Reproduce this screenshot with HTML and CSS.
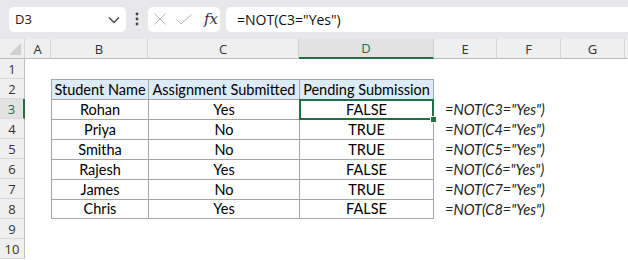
FILE: index.html
```html
<!DOCTYPE html>
<html lang="en">
<head>
    <meta charset="UTF-8">
    <title>NOT function</title>
    <link rel="stylesheet" href="styles.css">
</head>
<body>
    <div class="toolbar">
        <div class="name-box">
            <span>D3</span>
            <svg class="chevron" width="12" height="8" viewBox="0 0 12 8"><path d="M1 1.5 L6 6.5 L11 1.5" fill="none" stroke="#444" stroke-width="1.3"/></svg>
        </div>
        <div class="dots">
            <svg width="4" height="14" viewBox="0 0 4 14"><circle cx="2" cy="2" r="1.4" fill="#444"/><circle cx="2" cy="7" r="1.4" fill="#444"/><circle cx="2" cy="12" r="1.4" fill="#444"/></svg>
        </div>
        <div class="fx-box">
            <svg width="12" height="12" viewBox="0 0 12 12"><path d="M0.5 0.5 L11.5 11.5 M11.5 0.5 L0.5 11.5" stroke="#b4b4b4" stroke-width="1"/></svg>
            <svg width="16" height="11" viewBox="0 0 16 11"><path d="M0.5 5.5 L5 10 L15.5 0.5" fill="none" stroke="#b4b4b4" stroke-width="1"/></svg>
            <span class="fx">fx</span>
        </div>
        <div class="formula-box">=NOT(C3="Yes")</div>
    </div>

    <div class="sheet" id="sheet"></div>

    <script>
        const cols = ["A", "B", "C", "D", "E", "F", "G"];
        const rows = [
            ["Rohan", "Yes"],
            ["Priya", "No"],
            ["Smitha", "No"],
            ["Rajesh", "Yes"],
            ["James", "No"],
            ["Chris", "Yes"]
        ];

        const sheet = document.getElementById("sheet");

        function cell(cls, text) {
            let div = document.createElement("div");
            div.className = cls;
            div.textContent = text || "";
            sheet.appendChild(div);
            return div;
        }

        // column header row
        cell("corner");
        cols.forEach(c => cell("col-head" + (c === "D" ? " active" : ""), c));
        cell("col-head rest");

        for (let r = 1; r <= 10; r++) {
            cell("row-head" + (r === 3 ? " active" : ""), r);
            let data = rows[r - 3];
            for (let c = 0; c < cols.length + 1; c++) {
                let cls = "c";
                let text = "";
                if (r === 2 && c >= 1 && c <= 3) {
                    cls += " t head";
                    text = ["Student Name", "Assignment Submitted", "Pending Submission"][c - 1];
                } else if (data && c >= 1 && c <= 3) {
                    cls += " t";
                    if (c === 1) text = data[0];
                    if (c === 2) text = data[1];
                    if (c === 3) text = data[1] === "Yes" ? "FALSE" : "TRUE";
                } else if (data && c === 4) {
                    cls += " formula";
                    text = '=NOT(C' + r + '="Yes")';
                }
                if (r === 8 && c >= 1 && c <= 3) cls += " last-row";
                if (c === 3 && (data || r === 2)) cls += " last-col";
                let el = cell(cls, text);
                if (r === 3 && c === 3) el.classList.add("selected");
            }
        }
    </script>
</body>
</html>
```

FILE: styles.css
```css
body {
    margin: 0;
    background-color: #fff;
    font-family: "Open Sans", "Noto Sans", sans-serif;
    width: 628px;
    height: 260px;
    overflow: hidden;
}

.toolbar {
    display: flex;
    align-items: center;
    height: 39px;
    padding: 6px 0 7px 9px;
    box-sizing: border-box;
    background-color: #e8e8ea;
}

.name-box {
    width: 117px;
    height: 25px;
    box-sizing: border-box;
    background: #fff;
    border-radius: 5px;
    display: flex;
    align-items: center;
    justify-content: space-between;
    padding: 0 6px 0 6px;
    font-size: 13px;
    color: #222;
}

.chevron {
    margin-top: 1px;
}

.dots {
    width: 22px;
    display: flex;
    justify-content: center;
    align-items: center;
}

.fx-box {
    width: 72px;
    height: 25px;
    box-sizing: border-box;
    background: #fff;
    border-radius: 5px;
    display: flex;
    align-items: center;
    gap: 10px;
    padding-left: 6px;
}

.fx {
    font-family: "DejaVu Serif", "Liberation Serif", serif;
    font-style: italic;
    font-size: 15px;
    color: #333;
    margin-left: 2px;
}

.formula-box {
    flex: 1;
    height: 25px;
    margin-left: 6px;
    background: #fff;
    border-radius: 5px 0 0 5px;
    display: flex;
    align-items: center;
    padding-left: 11px;
    font-size: 14px;
    color: #111;
}

.sheet {
    display: grid;
    grid-template-columns: 25px 26px 97px 151px 135px 63px 64px 64px 1fr;
    grid-template-rows: 20px;
    grid-auto-rows: 20px;
}

.corner {
    background: #efefef;
    border-right: 1px solid #d4d4d4;
    border-bottom: 1px solid #bdbdbd;
    position: relative;
}

.corner::after {
    content: "";
    position: absolute;
    right: 3px;
    bottom: 3px;
    width: 12px;
    height: 12px;
    background: #cfcfcf;
    clip-path: polygon(100% 0, 100% 100%, 0 100%);
}

.col-head {
    background: #efefef;
    border-right: 1px solid #d4d4d4;
    border-bottom: 1px solid #bdbdbd;
    display: flex;
    align-items: center;
    justify-content: center;
    font-size: 13px;
    color: #333;
}

.col-head.rest {
    border-right: none;
}

.col-head.active {
    background: #e2e2e2;
    color: #1e7145;
    border-bottom: 2px solid #1e7145;
}

.row-head {
    background: #efefef;
    border-right: 1px solid #bdbdbd;
    border-bottom: 1px solid #dadada;
    display: flex;
    align-items: center;
    justify-content: center;
    font-size: 13px;
    color: #333;
}

.row-head.active {
    background: #e2e2e2;
    color: #1e7145;
    border-right: 2px solid #1e7145;
}

.c {
    box-sizing: border-box;
    font-family: Lato, "Liberation Sans", sans-serif;
    font-size: 14.5px;
    color: #000;
    white-space: nowrap;
    display: flex;
    align-items: flex-end;
    padding-bottom: 1px;
}

.t {
    justify-content: center;
    border-left: 1px solid #a6a6a6;
    border-top: 1px solid #a6a6a6;
}

.t.head {
    background: #ddebf7;
}

.t.last-row {
    border-bottom: 1px solid #a6a6a6;
}

.t.last-col {
    border-right: 1px solid #a6a6a6;
}

.formula {
    font-style: italic;
    color: #222;
    padding-left: 11px;
    overflow: visible;
}

.selected {
    position: relative;
}

.selected::after {
    content: "";
    position: absolute;
    left: -1px;
    top: -1px;
    right: -1px;
    bottom: -1px;
    border: 2px solid #1e7145;
}

.selected::before {
    content: "";
    position: absolute;
    right: -4px;
    bottom: -4px;
    width: 5px;
    height: 5px;
    background: #1e7145;
    border: 1px solid #fff;
    z-index: 2;
}
```
